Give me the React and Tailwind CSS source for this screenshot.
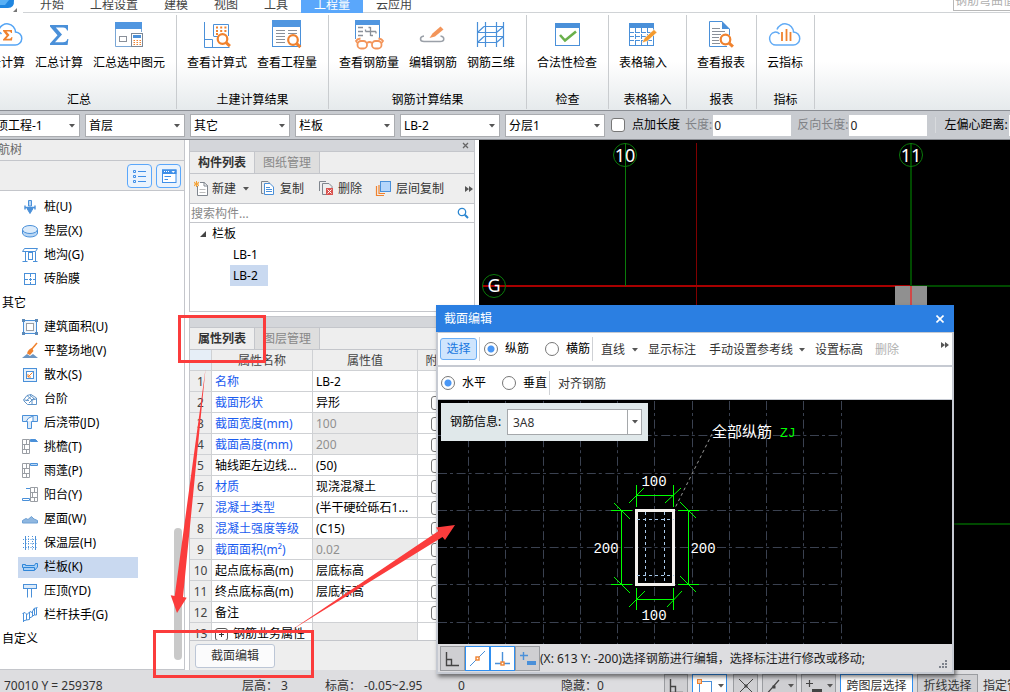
import React from "react";

const BLUE = "#4a90d9";
const ORANGE = "#f0822e";

function Caret({ className = "" }) {
  return (
    <svg width="6" height="4" viewBox="0 0 6 4" className={"shrink-0 " + className} aria-hidden="true">
      <path d="M0 0H6L3 3.5Z" fill="#555" />
    </svg>
  );
}

function Icon({ size = 32, children }) {
  return (
    <svg width={size} height={size} viewBox={`0 0 ${size} ${size}`} fill="none" className="shrink-0 overflow-visible" aria-hidden="true">
      {children}
    </svg>
  );
}

function Lens({ x, y }) {
  return (
    <g stroke={ORANGE}>
      <circle cx={x} cy={y} r="4.8" fill="#fff" strokeWidth="2.2" />
      <path d={`M${x + 3.6} ${y + 3.6}L${x + 7.4} ${y + 7.2}`} strokeWidth="3" />
    </g>
  );
}

const cloudPath = "M24 26H7A6.5 6.5 0 0 1 5.5 13.2Q8.5 12.6 10.5 15M8 10.5A8.5 8.5 0 0 1 24.5 13A6.5 6.5 0 0 1 24 26";

const ribbonIcons = {
  cloudSum: (
    <Icon>
      <path d={cloudPath} stroke="#55a5f5" strokeWidth="1.5" />
      <path d="M12 11H21V14H20Q19.6 12.6 18 12.6H15.5L18.5 16L15.2 19.8H18.5Q20 19.8 20.6 18H21.4L21 21.5H12V20.6L15.6 16.4L12 12Z" fill={ORANGE} />
    </Icon>
  ),
  sum: (
    <Icon>
      <path d="M7 6H25V11.5H24Q23.3 8.5 20 8.5H12.8L19 15.5L12 23.2H20Q23.4 23.2 24.4 20H25.4L24.6 26H7V24.6L14.5 16.3L7 7.4Z" fill={BLUE} />
    </Icon>
  ),
  sumSelected: (
    <Icon>
      <path d="M2.5 10V27.5H18M28.5 10V13" stroke="#7aa7d6" />
      <rect x="2" y="3" width="27" height="7" fill="#5096e0" />
      <rect x="6.5" y="17.5" width="7" height="5" stroke="#8a9099" />
      <rect x="18.5" y="14.5" width="11" height="13" stroke="#7c8896" fill="#fff" />
      <rect x="20" y="16" width="8" height="3" fill={BLUE} />
      <path d="M20.5 21.5H28M20.5 23.5H28M20.5 25.5H28" stroke={ORANGE} strokeDasharray="1.5 1.5" />
    </Icon>
  ),
  formula: (
    <Icon>
      <path d="M3.5 3V28.5H28.5M3.5 20.5H11.5V28.5" stroke={BLUE} />
      <path d="M12.5 17V5.5H27.5V17M12.5 17.5H17" stroke={BLUE} />
      <path d="M15 8.5H26M15 12H26M15 15H18" stroke={ORANGE} strokeWidth="2" strokeDasharray="2 2.2" />
      <Lens x={21.5} y={20} />
    </Icon>
  ),
  quantity: (
    <Icon>
      <rect x="1.5" y="2.5" width="28" height="25" stroke={BLUE} />
      <rect x="1" y="1" width="29" height="7" fill="#5096e0" />
      <path d="M5 11.5H14M5 14.5H14M5 17.5H14M5 20.5H14M5 23.5H14M17 11.5H26M17 14.5H26" stroke="#8a9099" />
      <Lens x={22} y={21} />
    </Icon>
  ),
  rebarView: (
    <Icon>
      <path d="M2.5 6V20M26.5 6V20" stroke={BLUE} />
      <rect x="2" y="1" width="25" height="5" fill="#5096e0" />
      <path d="M5 8.5H10M5 12.5H10M5 16.5H10M12.5 12.5H23M17.5 8V17M15.5 8.5H17.5M17.5 16.5H20M12.5 12.5V10.5M23 12.5V14.5" stroke="#8a9099" strokeWidth="1.3" />
      <g stroke="#f3955a" strokeWidth="1.8">
        <rect x="4.5" y="22" width="9.5" height="7.5" rx="3.5" />
        <rect x="19" y="22" width="9.5" height="7.5" rx="3.5" />
        <path d="M14 24Q16.5 22 19 24M4.5 24L3 22Q4 20 7.5 19.5M28.5 24L30 22Q29 20 25.5 19.5" />
      </g>
    </Icon>
  ),
  rebarEdit: (
    <Icon>
      <path d="M7 17Q3.5 17.5 3.5 20Q3.5 22.5 7 22.5H23Q26.8 22.5 26.8 20Q26.8 17.5 23.5 17" stroke="#9aa0a8" strokeWidth="1.5" />
      <path d="M12.5 19L15.5 14.5L23.5 7.5L26.5 10.5L18 17.5Z" fill="#f3955a" />
    </Icon>
  ),
  rebar3d: (
    <Icon>
      <path d="M2.5 3V28M10.5 3V28M21.5 3V28M28.5 3V28M9 7.5H29M2 13.5H22M9 17.5H29M2 23.5H22M2.5 13.5L9 7.5M21.5 13.5L28.5 7.5M2.5 23.5L9 17.5M21.5 23.5L28.5 17.5" stroke={BLUE} strokeWidth="1.2" />
    </Icon>
  ),
  check: (
    <Icon>
      <rect x="4.5" y="4.5" width="24" height="22" stroke={BLUE} />
      <rect x="4" y="4" width="25" height="5" fill={BLUE} />
      <path d="M9 16L14 21.5L25 12.5" stroke="#6ab04c" strokeWidth="2.6" />
    </Icon>
  ),
  tableInput: (
    <Icon>
      <rect x="2.5" y="4.5" width="24" height="22" stroke={BLUE} />
      <rect x="2" y="4" width="25" height="5" fill={BLUE} />
      <path d="M2 13.5H27M2 17.5H27M2 21.5H27M8.5 9V27M14.5 9V27M20.5 9V27" stroke={BLUE} strokeDasharray="5 1" />
      <path d="M15 24L17.5 19L27 10.5L30 13.5L20.5 22Z" fill="#f39a2e" stroke="#fff" strokeWidth=".6" />
    </Icon>
  ),
  report: (
    <Icon>
      <path d="M17 2.5H4.5V27.5H22M24.5 10V16" stroke={BLUE} />
      <path d="M17 2L25 10H17Z" fill={BLUE} />
      <path d="M7 9.5H15M7 12.5H20M7 15.5H16M7 18.5H14M7 21.5H14M7 24.5H15" stroke="#8a9099" />
      <Lens x={20.5} y={20.5} />
    </Icon>
  ),
  cloudIndex: (
    <Icon>
      <path d={cloudPath} stroke="#62abf5" strokeWidth="1.5" />
      <path d="M13 13V22M17.5 10V22M21.5 13V22" stroke={ORANGE} strokeWidth="1.8" />
    </Icon>
  ),
};

const ribbonGroups = [
  { label: "汇总", cls: "-ml-[18px] w-[195px] px-[7px]", items: [["cloudSum", "云计算"], ["sum", "汇总计算"], ["sumSelected", "汇总选中图元"]] },
  { label: "土建计算结果", cls: "w-[152px] px-[10px]", items: [["formula", "查看计算式"], ["quantity", "查看工程量"]] },
  { label: "钢筋计算结果", cls: "w-[198px] px-[10px]", items: [["rebarView", "查看钢筋量"], ["rebarEdit", "编辑钢筋"], ["rebar3d", "钢筋三维"]] },
  { label: "检查", cls: "w-[82px] px-[10px]", items: [["check", "合法性检查"]] },
  { label: "表格输入", cls: "w-[78px] px-[10px]", items: [["tableInput", "表格输入"]] },
  { label: "报表", cls: "w-[70px] px-[10px]", items: [["report", "查看报表"]] },
  { label: "指标", cls: "w-[58px] px-[10px]", items: [["cloudIndex", "云指标"]] },
];

const tabs = ["开始", "工程设置", "建模", "视图", "工具", "工程量", "云应用"];

function TopTabs() {
  return (
    <header className="flex h-[13px] shrink-0 items-end overflow-hidden bg-white">
      <div className="flex h-[13px] w-[23px] shrink-0">
        <svg width="23" height="13" aria-hidden="true">
          <path d="M0 0H14Q14.5 8 8 8H0Z" fill="#1f86e0" />
          <path d="M0 0H9L5 5H0Z" fill="#58b0f5" />
          <path d="M17 8V12H13Z" fill="#777" />
        </svg>
      </div>
      <div className="h-[18px] w-1 border-b border-[#d0d3d6]" />
      <nav className="flex">
        {tabs.map((t) => (
          <button
            key={t}
            className={
              t === "工程量"
                ? "h-[18px] border-b border-[#5aa7fb] bg-[#5aa7fb] px-[13px] pt-[2px] leading-4 text-white"
                : "h-[18px] border-b border-[#d0d3d6] px-[13px] pt-[2px] leading-4 text-[#444]"
            }
          >
            {t}
          </button>
        ))}
      </nav>
      <div className="flex h-[22px] flex-1 justify-end border-b border-[#d0d3d6] pb-px">
        <input aria-label="搜索功能" placeholder="钢筋弯曲值" className="w-[57px] border border-r-0 border-[#b8b8b8] pl-px placeholder:text-[#b0b0b0]" />
      </div>
    </header>
  );
}

function Ribbon() {
  return (
    <section className="flex h-[97px] shrink-0 overflow-hidden bg-linear-to-b from-white from-50% to-[#e6eaec]">
      {ribbonGroups.map((g) => (
        <div key={g.label} className={"mt-[2px] mb-px flex shrink-0 flex-col justify-between border-r border-[#c9cccf] pt-1 " + g.cls}>
          <div className="flex gap-[10px]">
            {g.items.map(([icon, text]) => (
              <button key={text} className="flex flex-col items-center gap-[3px] leading-[18px] whitespace-nowrap text-black">
                {ribbonIcons[icon]}
                {text}
              </button>
            ))}
          </div>
          <div className="text-center leading-[18px] whitespace-nowrap text-black">{g.label}</div>
        </div>
      ))}
    </section>
  );
}

function FilterSelect({ value, label }) {
  return (
    <div className="relative w-[100px] shrink-0">
      <select aria-label={label} className="h-[23px] w-full appearance-none border border-[#aaacb0] bg-white pt-px pl-[3px] text-black">
        <option>{value}</option>
      </select>
      <Caret className="pointer-events-none absolute top-[10px] right-[5px]" />
    </div>
  );
}

function FilterBar() {
  const field = "h-[21px] w-[78px] shrink-0 bg-white pl-px text-[#222]";
  return (
    <section className="flex h-[30px] shrink-0 items-center overflow-hidden border-y border-y-[#8a8d93] bg-[#c8cbd0] whitespace-nowrap">
      <div className="-ml-5 flex gap-[5px]">
        <FilterSelect label="单项工程" value="单项工程-1" />
        <FilterSelect label="楼层" value="首层" />
        <FilterSelect label="类别" value="其它" />
        <FilterSelect label="构件类型" value="栏板" />
        <FilterSelect label="构件" value="LB-2" />
        <FilterSelect label="分层" value="分层1" />
      </div>
      <label className="ml-[6px] flex shrink-0 items-center gap-[7px] text-black">
        <input type="checkbox" className="size-[14px] appearance-none rounded-[3px] border border-[#777] bg-white" />
        点加长度
      </label>
      <label className="ml-[5px] flex shrink-0 items-center gap-px text-[#808286]">
        长度:
        <input defaultValue="0" className={field} />
      </label>
      <label className="ml-[6px] flex shrink-0 items-center gap-px text-[#808286]">
        反向长度:
        <input defaultValue="0" className={field} />
      </label>
      <div className="mx-2 h-4 w-px shrink-0 bg-[#d8dadd]" />
      <label className="flex shrink-0 items-center gap-px text-black">
        左偏心距离:
        <input defaultValue="" className={field} />
      </label>
    </section>
  );
}

const wall = <path d="M.5 .5H7.5V14.5H.5ZM4.5 .5V5M.5 5.5H7.5M2.5 5.5V10M.5 10.5H7.5M4.5 10.5V14.5" stroke="#9a9ea4" />;

const navIcons = {
  pile: <><path d="M6.5 1.5H9.5V7H6.5Z" fill="#b9d7f5" stroke={BLUE} /><path d="M3 6.5V10.5M13 6.5V10.5M3 8.5H13" stroke={BLUE} strokeWidth="1.4" /><path d="M5 9.5H11L8 14.5Z" fill={BLUE} stroke={BLUE} /></>,
  cushion: <><path d="M.5 6.5V10A7.5 4 0 0 0 15.5 10V6.5" fill="#b9d7f5" stroke={BLUE} /><ellipse cx="8" cy="6.5" rx="7.5" ry="4" fill="#dcebfa" stroke={BLUE} /></>,
  trench: <path d="M2.5 1.5H15.5L13.5 4.5H.5ZM3.5 4.5V14M6.5 5.5V12M10.5 5.5V12M13.5 4.5V14M.5 14.5H5.5M11 14.5H15.5M6 12.5H11M6 5.5H11" stroke={BLUE} />,
  mold: <><rect x="2.5" y="2.5" width="11" height="11" stroke={BLUE} /><path d="M8.5 3V13M3 8.5H13" stroke={BLUE} strokeDasharray="3 1" /></>,
  area: <><rect x="1.5" y="1.5" width="13" height="13" fill="#eef5fc" stroke={BLUE} /><rect x="4.5" y="4.5" width="7" height="7" fill="#fff" stroke="#9a9ea4" /><path d="M0 0H3V3H0ZM13 0H16V3H13ZM0 13H3V16H0ZM13 13H16V16H13Z" fill="#5d8ab8" /></>,
  site: <><path d="M0 15L5 11L8 13L11 11L16 15Z" fill="#6b95c2" /><path d="M15 0L9 7" stroke={ORANGE} strokeWidth="1.5" /><path d="M10 5L11.5 8L8 12L5 10.5Q6 6 10 5Z" fill={ORANGE} /></>,
  apron: <><rect x="1.5" y="1.5" width="13" height="13" fill="#e6f1fc" stroke={BLUE} /><rect x="4.5" y="4.5" width="7" height="7" fill="#fff" stroke={BLUE} /><path d="M10.5 5.5L6 10M6 7V10H9" stroke={ORANGE} /></>,
  steps: <path d="M1.5 9L5 4.5L9 3.5L14.5 7V13.5H5.5L1.5 9.5M5 4.5L10 9V13M1.5 9L7 9.5M8 4L13 8.5M4 10L9 5.5M7 12L12 7M10 9L14 8" stroke="#5f93c8" />,
  postpour: <><path d="M.5 .5H15.5V6.5H9.5V13.5H5.5V6.5H.5Z" fill="#dcebfa" stroke={BLUE} /><path d="M4.5 6Q5 3 11 1V6" fill="#fff" stroke={BLUE} /></>,
  cantilever: <>{wall}<path d="M8.5 .5H13.5L15.5 2.5H8.5Z" fill={BLUE} stroke={BLUE} /></>,
  canopy: <>{wall}<path d="M8.5 .5H15.5V2.5H8.5Z" fill="#b9d7f5" stroke={BLUE} /></>,
  balcony: <><g transform="translate(8 0)">{wall}</g><path d="M4 1.5H8M.5 11.5H7.5V13.5H.5Z" stroke={BLUE} /></>,
  roof: <path d="M.5 12V9.5L4 7.5L6 8.5L9.5 5.5L12 8L15.5 9.5V12Z" fill="#8fb7e0" stroke="#6ea0d4" />,
  insulation: <><path d="M3.5 1V15M13.5 1V15" stroke={BLUE} /><path d="M6.5 1V15M10.5 1V15M1 4.5H15M1 8.5H15M1 12.5H15" stroke={BLUE} strokeDasharray="1 1.5" /></>,
  railing: <><path d="M.5 5.5H3.5V6.5H12.5L13.5 4.5H15.5V8L12.5 11.5H1.5V8.5H.5Z" fill="#a9d0f7" stroke="#2f86d8" /><path d="M1.5 8.5H12.5V11" stroke="#2f86d8" /></>,
  coping: <><rect x="1.5" y="1.5" width="13" height="4" fill="#dcebfa" stroke={BLUE} /><path d="M5.5 6V14.5M9.5 6V14.5" stroke={BLUE} /></>,
  handrail: <path d="M.5 6.5L3 5.5L5 7.5L8 4.5L10 5.5L12 1.5L15.5 .5M1.5 6V15M4.5 7V13L1 14M7.5 5V12.5L4.5 13M10.5 4.5V9.5L7.5 11M12.5 2V8L10.5 9M14.5 1V8H12.5" stroke={BLUE} />,
};

const navTree = [
  ["pile", "桩(U)"], ["cushion", "垫层(X)"], ["trench", "地沟(G)"], ["mold", "砖胎膜"],
  [null, "其它"],
  ["area", "建筑面积(U)"], ["site", "平整场地(V)"], ["apron", "散水(S)"], ["steps", "台阶"],
  ["postpour", "后浇带(JD)"], ["cantilever", "挑檐(T)"], ["canopy", "雨蓬(P)"], ["balcony", "阳台(Y)"],
  ["roof", "屋面(W)"], ["insulation", "保温层(H)"], ["railing", "栏板(K)"], ["coping", "压顶(YD)"],
  ["handrail", "栏杆扶手(G)"],
  [null, "自定义"],
];

function NavTree() {
  return (
    <aside className="relative flex w-[185px] shrink-0 flex-col overflow-hidden border-r border-b border-[#c4c6cb] bg-white">
      <div className="h-[21px] shrink-0 border-b border-[#c4c6cb] bg-[#eee] leading-5 text-[#666]">
        <span className="-ml-[14px]">导航树</span>
      </div>
      <div className="flex h-[30px] shrink-0 items-center justify-end gap-1 border-b border-[#c4c6cb] bg-[#eee] pr-[3px]">
        <button aria-label="列表" className="flex h-6 w-[25px] items-center justify-center rounded border border-[#5aa7fb] bg-[#eaf3fd]">
          <Icon size={14}>
            <path d="M.5 1.5H2.5V3.5H.5ZM.5 6.5H2.5V8.5H.5ZM.5 11.5H2.5V13.5H.5Z" stroke="#3f8fe8" />
            <path d="M5 2.5H13M5 7.5H13M5 12.5H13" stroke="#3f8fe8" />
          </Icon>
        </button>
        <button aria-label="视图" className="flex h-6 w-[25px] items-center justify-center rounded border border-[#5aa7fb] bg-[#eaf3fd]">
          <Icon size={16}>
            <rect x="1.5" y="2" width="13.5" height="12.5" fill="#fff" stroke="#3f8fe8" />
            <path d="M1 1.5H15.5V6H1Z" fill="#3f8fe8" />
            <path d="M3 3.5H8" stroke="#fff" strokeDasharray="1 1" />
            <path d="M10.5 3H14L12.2 5Z" fill="#fff" />
            <path d="M3.5 8.5H10M3.5 11.5H7" stroke="#3f8fe8" />
          </Icon>
        </button>
      </div>
      <ul className="pt-1 text-black">
        {navTree.map(([icon, text]) => (
          <li key={text} className="flex h-6 items-center">
            {icon ? (
              <button className={"ml-[18px] flex h-[21px] w-[120px] items-center gap-[6px] pl-1 " + (icon === "railing" ? "bg-[#c9d9f0]" : "")}>
                <Icon size={16}>{navIcons[icon]}</Icon>
                {text}
              </button>
            ) : (
              <span className="pl-[2px]">{text}</span>
            )}
          </li>
        ))}
      </ul>
      <div className="absolute right-[2px] bottom-[9px] h-[132px] w-2 rounded-full bg-[#c9c9c9]" />
    </aside>
  );
}

function PanelTabs({ active, other }) {
  return (
    <div className="flex h-[22px] shrink-0 border-b border-[#c4c6cb] bg-[#eee]">
      <button className="w-[65px] border-r border-[#c4c6cb] font-bold text-[#333]">{active}</button>
      <button className="w-[65px] border-r border-[#c4c6cb] bg-[#dedede] text-[#888]">{other}</button>
    </div>
  );
}

function DoubleArrow() {
  return (
    <svg width="8" height="6" viewBox="0 0 8 6" aria-hidden="true"><path d="M0 0L4 3L0 6ZM4 0L8 3L4 6Z" fill="#555" /></svg>
  );
}

function ComponentList() {
  return (
    <section className="flex h-[172px] shrink-0 flex-col border border-t-0 border-[#c4c6cb] bg-white">
      <div className="flex h-3 shrink-0 items-center justify-end border-b border-[#c4c6cb] bg-[#d4d6da] pr-[5px]">
        <button aria-label="关闭" className="flex">
          <svg width="7" height="7" viewBox="0 0 7 7" aria-hidden="true"><path d="M1 1L6 6M6 1L1 6" stroke="#666" strokeWidth="1.3" /></svg>
        </button>
      </div>
      <PanelTabs active="构件列表" other="图纸管理" />
      <div className="flex h-[30px] shrink-0 items-center border-b border-[#c4c6cb] bg-[#eee] pl-1 whitespace-nowrap text-[#333]">
        <button className="flex items-center gap-[3px]">
          <Icon size={15}>
            <path d="M3.5 5V14.5H13.5V4.5L10 1.5H6" fill="#fff" stroke="#80868e" />
            <path d="M10 1V5H14" stroke="#80868e" />
            <path d="M5.5 8.5H11.5M5.5 11.5H11.5" stroke="#bbb" />
            <path d="M0 1L5 5M5 1L0 5M2.5 0V6M0 3H5" stroke="#f5a030" />
          </Icon>
          新建
          <Caret className="ml-1" />
        </button>
        <button className="ml-3 flex items-center gap-1">
          <Icon size={15}>
            <path d="M2.5 12.5H.5V.5H7L9 2.5" stroke="#80868e" />
            <path d="M3.5 2.5H9L12.5 6V13.5H3.5Z" fill="#fff" stroke={BLUE} />
            <path d="M5 6.5H9M5 8.5H11M5 10.5H11" stroke={BLUE} />
          </Icon>
          复制
        </button>
        <button className="ml-[15px] flex items-center gap-1">
          <Icon size={15}>
            <path d="M.5 10V.5H7M3.5 13.5V2.5H10L13 5.5V7M3.5 13.5H7" stroke="#80868e" />
            <rect x="7" y="7" width="7" height="7" fill="#d9534f" />
            <path d="M8.5 8.5L12.5 12.5M12.5 8.5L8.5 12.5" stroke="#fff" />
          </Icon>
          删除
        </button>
        <button className="ml-[14px] flex items-center gap-[5px]">
          <Icon size={15}>
            <path d="M.5 5V14.5H8M3 4V12.5H9" stroke={ORANGE} strokeWidth="1.2" />
            <rect x="4.5" y=".5" width="10" height="10" fill="#b5d6fb" stroke={BLUE} />
          </Icon>
          层间复制
        </button>
        <span className="flex-1" />
        <button aria-label="更多" className="pr-px"><DoubleArrow /></button>
      </div>
      <label className="flex h-[19px] shrink-0 items-center border-b border-[#c4c6cb] pr-[5px]">
        <input aria-label="搜索构件" placeholder="搜索构件..." className="min-w-0 flex-1 pt-px pl-px placeholder:text-[#888]" />
        <Icon size={12}>
          <circle cx="5" cy="5" r="3.7" stroke="#2b86d0" strokeWidth="1.3" />
          <path d="M7.8 7.8L11 11" stroke="#2b86d0" strokeWidth="2" />
        </Icon>
      </label>
      <ul className="text-black">
        <li className="flex h-[21px] items-center gap-[6px] pl-[10px]">
          <svg width="6" height="6" viewBox="0 0 6 6" aria-hidden="true"><path d="M6 0V6H0Z" fill="#444" /></svg>
          栏板
        </li>
        <li className="flex h-[21px] items-center pl-10"><button className="h-full px-[3px]">LB-1</button></li>
        <li className="flex h-[21px] items-center pl-10"><button className="h-full w-[38px] bg-[#c9d9f0] px-[3px] text-left">LB-2</button></li>
      </ul>
    </section>
  );
}

const rows = [
  ["名称", "LB-2", "b", false],
  ["截面形状", "异形", "b", true],
  ["截面宽度(mm)", "100", "bg", true],
  ["截面高度(mm)", "200", "bg", true],
  ["轴线距左边线...", "(50)", "", true],
  ["材质", "现浇混凝土", "b", true],
  ["混凝土类型", "(半干硬砼砾石1...", "b", true],
  ["混凝土强度等级", "(C15)", "b", true],
  ["截面面积(m²)", "0.02", "bg", true],
  ["起点底标高(m)", "层底标高", "", true],
  ["终点底标高(m)", "层底标高", "", true],
  ["备注", "", "", true],
  ["钢筋业务属性", "", "g", false],
];

function PropertyList() {
  const cell = "h-[21px] border-r border-b border-[#cfd1d4] pt-[2px] pr-0 pb-0 font-normal leading-[18px] whitespace-nowrap overflow-hidden ";
  return (
    <section className="flex min-h-0 flex-1 flex-col border-x border-[#c4c6cb] bg-[#eee]">
      <div className="h-3 shrink-0 border-y border-[#c4c6cb] bg-[#d4d6da]" />
      <PanelTabs active="属性列表" other="图层管理" />
      <div className="min-h-0 flex-1 overflow-hidden border-b border-[#c4c6cb] bg-white">
        <table className="w-full table-fixed border-separate border-spacing-0">
          <colgroup>
            <col className="w-[22px]" />
            <col className="w-[101px]" />
            <col className="w-[105px]" />
            <col className="w-[40px]" />
            <col />
          </colgroup>
          <thead className="bg-[#eee] text-[#444]">
            <tr>
              <th className={cell + "bg-[#e6eef7]"} />
              <th className={cell}>属性名称</th>
              <th className={cell}>属性值</th>
              <th className={cell}>附加</th>
              <th className={cell} />
            </tr>
          </thead>
          <tbody className="text-black">
            {rows.map(([name, value, kind, box], i) => (
              <tr key={name}>
                <td className={cell + "bg-[#eee] text-center text-[#444]"}>{i + 1}</td>
                <td className={cell + "pl-[3px] " + (kind.includes("b") ? "text-[#1a5cf0]" : "")}>
                  {i === 12 ? (
                    <span className="flex items-center gap-[5px]">
                      <button aria-label="展开" className="flex size-[13px] items-center justify-center rounded-[3px] border border-[#555]">
                        <svg width="5" height="5" viewBox="0 0 5 5" aria-hidden="true"><path d="M2.5 0V5M0 2.5H5" stroke="#333" /></svg>
                      </button>
                      {name}
                    </span>
                  ) : name}
                </td>
                <td className={cell + "pl-[3px] " + (kind.includes("g") ? "bg-[#ebebeb] text-[#909090]" : "")}>{value}</td>
                <td className={cell}>
                  {box && <input type="checkbox" aria-label={"附加 " + name} className="mx-auto block size-[14px] appearance-none rounded-[3px] border border-[#777] bg-white" />}
                </td>
                <td className={cell} />
              </tr>
            ))}
          </tbody>
        </table>
      </div>
      <div className="flex h-[29px] shrink-0 items-center pl-[5px]">
        <button className="h-6 w-20 rounded-[3px] border border-[#bcc6d6] bg-[#fbfbfc] text-[#333]">截面编辑</button>
      </div>
    </section>
  );
}

function ModelCanvas() {
  return (
    <main className="min-w-0 flex-1 overflow-hidden bg-black">
      <svg width="531" height="530" viewBox="479 140 531 530" fill="none" className="block">
        <path d="M696.5 143V330" stroke="#800000" />
        <path d="M483 286H911" stroke="#a80000" strokeWidth="2" />
        <path d="M911 286H1010M953 524H1010" stroke="#004a00" strokeWidth="2" />
        <rect x="895" y="286" width="32" height="30" fill="#909090" />
        <path d="M911 286V316" stroke="#d04848" strokeWidth="2" />
        <path d="M625.5 143V286" stroke="#0a7a0a" />
        <path d="M911 143V286" stroke="#004a00" strokeWidth="2" />
        <g stroke="#0a7a0a">
          <circle cx="625" cy="155" r="11.5" />
          <circle cx="911" cy="155" r="11.5" />
          <circle cx="494" cy="286" r="11.5" />
        </g>
        <g fill="#fff" fontSize="18" textAnchor="middle" fontFamily="'Noto Sans',sans-serif">
          <text x="625" y="162">10</text>
          <text x="911" y="162">11</text>
          <text x="494" y="292">G</text>
        </g>
      </svg>
    </main>
  );
}

const gridX = [468, 505, 543, 580, 617, 654, 692, 729, 766, 803, 841];
const gridY = [436, 474, 511, 548, 585, 623];

function SectionDrawing() {
  return (
    <svg width="514" height="244" viewBox="438 400 514 244" fill="none" className="block">
      <g stroke="#3a4150" strokeDasharray="9 3 3 3.6">
        {gridX.map((x) => <path key={x} d={`M${x + 0.5} 401V644`} />)}
        {gridY.map((y) => <path key={y} d={`M438 ${y - 0.5}H841`} />)}
      </g>
      <path d="M712 434L674 510" stroke="#999" strokeDasharray="3 3" />
      <g stroke="#0f0">
        <path d="M636.5 485V507M673.5 485V507M636 495.5H674M629 503L644 488M665 503L681 488" />
        <path d="M636.5 588V610M673.5 588V610M636 599.5H674M629 607L645 591M667 607L682 591" />
        <path d="M611 510.5H632M611 584.5H632M621.5 510V585M614 503L630 519M614 577L630 593" />
        <path d="M678 510.5H699M678 584.5H699M688.5 510V585M680 502L696 518M680 576L696 592" />
      </g>
      <rect x="636.5" y="510.5" width="37" height="74" stroke="#f4f1ee" strokeWidth="3" />
      <path d="M645.5 512V584M664.5 512V584M637 519.5H674M637 575.5H674" stroke="#a9c9ea" strokeDasharray="3 3" />
      <g fill="#fff" fontSize="14" textAnchor="middle" fontFamily="'Liberation Mono',monospace">
        <text x="654" y="486">100</text>
        <text x="654" y="620">100</text>
        <text x="606" y="553">200</text>
        <text x="703" y="553">200</text>
      </g>
      <text x="712" y="437" fill="#fff" fontSize="15" fontFamily="'Noto Sans CJK SC',sans-serif">全部纵筋</text>
      <text x="780" y="437" fill="#0f0" fontSize="13" fontFamily="'Liberation Mono',monospace">ZJ</text>
    </svg>
  );
}

function Radio({ name, label, checked }) {
  return (
    <label className="flex items-center gap-[7px] text-black">
      <input
        type="radio"
        name={name}
        defaultChecked={checked}
        className="size-[14px] appearance-none rounded-full border border-[#777] bg-white checked:bg-[radial-gradient(circle,#4a97f5_0_3px,white_4px)]"
      />
      {label}
    </label>
  );
}

const glyphs = {
  corner: <path d="M4.5 4V17.5H17M4.5 11.5H9.5V17" stroke="#444" strokeWidth="1.4" />,
  mid: <><path d="M3 18L18 3" stroke={BLUE} /><rect x="9" y="9" width="3" height="3" fill="#fff" stroke={ORANGE} strokeWidth="1.4" /></>,
  perp: <><path d="M10.5 4V15M3 15.5H18" stroke={BLUE} strokeWidth="1.4" /><rect x="9" y="14" width="3" height="3" fill="#fff" stroke={ORANGE} strokeWidth="1.4" /></>,
  plus: <><path d="M3 7.5H11M6.5 4V12" stroke={BLUE} strokeWidth="1.4" /><rect x="10" y="13" width="9" height="4" fill={BLUE} /></>,
};

function DialogTool({ glyph, label, on }) {
  return (
    <button
      aria-label={label}
      className={"flex h-[25px] w-[25px] items-center justify-center border " + (on ? "border-[#2f8ff0] bg-white" : "border-[#9a9ca0] bg-[#cfcfd2]")}
    >
      <Icon size={21}>{glyphs[glyph]}</Icon>
    </button>
  );
}

function SectionDialog() {
  const bar = "flex shrink-0 items-center bg-white whitespace-nowrap text-[#333] ";
  const sep = "h-6 w-px bg-[#cfd1d5]";
  return (
    <div role="dialog" aria-label="截面编辑" className="absolute top-[305px] left-[436px] w-[518px] bg-[#c6cad2] shadow-[2px_3px_4px_rgba(0,0,0,0.5)]">
      <div className="flex h-[27px] items-center justify-between bg-[#2b7fe2] pr-[10px] pl-2 text-white">
        截面编辑
        <button aria-label="关闭">
          <svg width="8" height="8" viewBox="0 0 8 8" aria-hidden="true"><path d="M.5 .5L7.5 7.5M7.5 .5L.5 7.5" stroke="#fff" strokeWidth="1.6" /></svg>
        </button>
      </div>
      <div className="flex flex-col px-[2px] pt-px pb-[2px]">
        <div className={bar + "h-8 pl-[2px]"}>
          <button className="h-[22px] w-[37px] rounded-[3px] border border-[#6aaef5] bg-[#cfe5fd] text-[#1a78e0]">选择</button>
          <span className={sep + " ml-[2px]"} />
          <div className="ml-1 flex gap-4">
            <Radio name="bar" label="纵筋" checked />
            <Radio name="bar" label="横筋" />
          </div>
          <span className={sep + " ml-[2px]"} />
          <button className="ml-2 flex items-center gap-[7px] pt-[2px]">直线<Caret /></button>
          <button className="ml-[10px] pt-[2px]">显示标注</button>
          <button className="ml-[13px] flex items-center gap-[6px] pt-[2px]">手动设置参考线<Caret /></button>
          <button className="ml-[10px] pt-[2px]">设置标高</button>
          <button className="ml-3 pt-[2px] text-[#b0b0b0]" disabled>删除</button>
          <span className="flex-1" />
          <button aria-label="更多" className="mb-2 pr-[3px]"><DoubleArrow /></button>
        </div>
        <div className={bar + "mt-[2px] h-8 pl-[3px]"}>
          <div className="flex gap-4">
            <Radio name="dir" label="水平" checked />
            <Radio name="dir" label="垂直" />
          </div>
          <span className={sep + " ml-[2px]"} />
          <button className="ml-2 pt-[2px]">对齐钢筋</button>
        </div>
        <div className="relative mt-px overflow-hidden bg-black">
          <SectionDrawing />
          <label className="absolute top-[3px] left-[3px] flex h-[38px] w-[207px] items-center justify-between bg-[#e0e8ea] pr-[6px] pl-[9px] text-black">
            钢筋信息:
            <span className="relative flex">
              <select className="h-[26px] w-[135px] appearance-none border border-[#a5a8ab] bg-white pt-px pl-[5px] text-[#333]">
                <option>3A8</option>
              </select>
              <span className="pointer-events-none absolute top-px right-px flex h-6 w-[14px] items-center justify-center border-l border-[#a5a8ab]">
                <Caret />
              </span>
            </span>
          </label>
        </div>
        <div className="flex h-7 items-center bg-[#dddde0] pt-px pl-[2px] whitespace-nowrap text-[#222]">
          <DialogTool glyph="corner" label="正交" />
          <DialogTool glyph="mid" label="中点" on />
          <DialogTool glyph="perp" label="垂点" on />
          <DialogTool glyph="plus" label="动态输入" />
          <span className="pt-px">(X: 613 Y: -200)选择钢筋进行编辑，选择标注进行修改或移动;</span>
          <span className="flex-1" />
          <svg width="9" height="9" viewBox="0 0 9 9" className="mt-3 mr-1" aria-hidden="true">
            <path d="M6 0H8V2H6ZM3 3H5V5H3ZM6 3H8V5H6ZM0 6H2V8H0ZM3 6H5V8H3ZM6 6H8V8H6Z" fill="#7d828c" />
          </svg>
        </div>
      </div>
    </div>
  );
}

function StatusBar() {
  const off = "flex h-[25px] shrink-0 items-center justify-center gap-1 border border-[#9a9ca0] bg-[#cfcfd2] ";
  const on = "flex h-[25px] shrink-0 items-center justify-center gap-1 border border-[#2f8ff0] bg-white ";
  return (
    <footer className="h-[22px] shrink-0 overflow-hidden bg-[#dddde0]">
      <div className="flex h-8 items-center whitespace-nowrap text-[#333]">
        <span className="w-[242px] shrink-0 pl-1">70010 Y = 259378</span>
        <span className="w-[83px] shrink-0">层高： 3</span>
        <span className="w-[133px] shrink-0">标高： -0.05~2.95</span>
        <span className="w-[103px] shrink-0">0</span>
        <span className="w-[103px] shrink-0">隐藏：0</span>
        <div className="flex gap-1">
          <button aria-label="正交" className={off + "w-6"}>
            <Icon size={20}><path d="M4.5 3V16.5H17M4.5 10.5H9.5V16" stroke="#444" strokeWidth="1.4" /></Icon>
          </button>
          <button aria-label="对象捕捉" className={on + "w-[35px]"}>
            <Icon size={19}><rect x="4.5" y="4.5" width="12" height="13" stroke={BLUE} /><rect x="2.5" y="2.5" width="4" height="4" fill="#f9c9a0" stroke={ORANGE} /></Icon>
            <Caret />
          </button>
          <button aria-label="交点" className={off + "ml-[2px] w-[25px]"}>
            <Icon size={20}><path d="M3 3L17 17M17 3L3 17" stroke="#444" /><rect x="8.5" y="8.5" width="3" height="3" fill="#444" /></Icon>
          </button>
          <button aria-label="角度" className={off + "w-[35px]"}>
            <Icon size={19}><path d="M14 3L3 15.5H18" stroke="#444" strokeWidth="1.2" /><rect x="7.500" y="8.5" width="3" height="3" fill="#444" /></Icon>
            <Caret />
          </button>
          <button aria-label="动态输入" className={off + "w-[35px]"}>
            <Icon size={19}><path d="M2 6.5H9M5.5 3V10" stroke="#444" strokeWidth="1.2" /><rect x="8" y="12" width="10" height="4" fill="#444" /></Icon>
            <Caret />
          </button>
          <button className={on + "w-[73px]"}>跨图层选择</button>
          <button className={off + "w-[61px]"}>折线选择</button>
          <button className="pl-px">指定管理</button>
        </div>
      </div>
    </footer>
  );
}

function Annotations() {
  return (
    <svg width="1010" height="692" viewBox="0 0 1010 692" fill="none" className="pointer-events-none absolute top-0 left-0" aria-hidden="true">
      <g stroke="#fb3c3c" strokeWidth="3">
        <rect x="179.5" y="316.5" width="85" height="45" />
        <rect x="154.5" y="631.5" width="158" height="45" />
      </g>
      <path d="M205.5 369L174.7 596L170.7 595.3L177 613L186.7 597.7L183 597Z" fill="#fb3c3c" />
      <path d="M290 631L438.5 531L436 527.5L455 525L445 540L442.5 537Z" fill="#fb3c3c" />
    </svg>
  );
}

export default function App() {
  return (
    <div className="relative flex h-screen flex-col overflow-hidden bg-white font-['Noto_Sans','Noto_Sans_CJK_SC',sans-serif] text-[12px] leading-[18px]">
      <TopTabs />
      <Ribbon />
      <FilterBar />
      <div className="flex min-h-0 flex-1">
        <NavTree />
        <div className="mx-1 flex w-[286px] shrink-0 flex-col gap-1">
          <ComponentList />
          <PropertyList />
        </div>
        <ModelCanvas />
      </div>
      <StatusBar />
      <SectionDialog />
      <Annotations />
    </div>
  );
}
